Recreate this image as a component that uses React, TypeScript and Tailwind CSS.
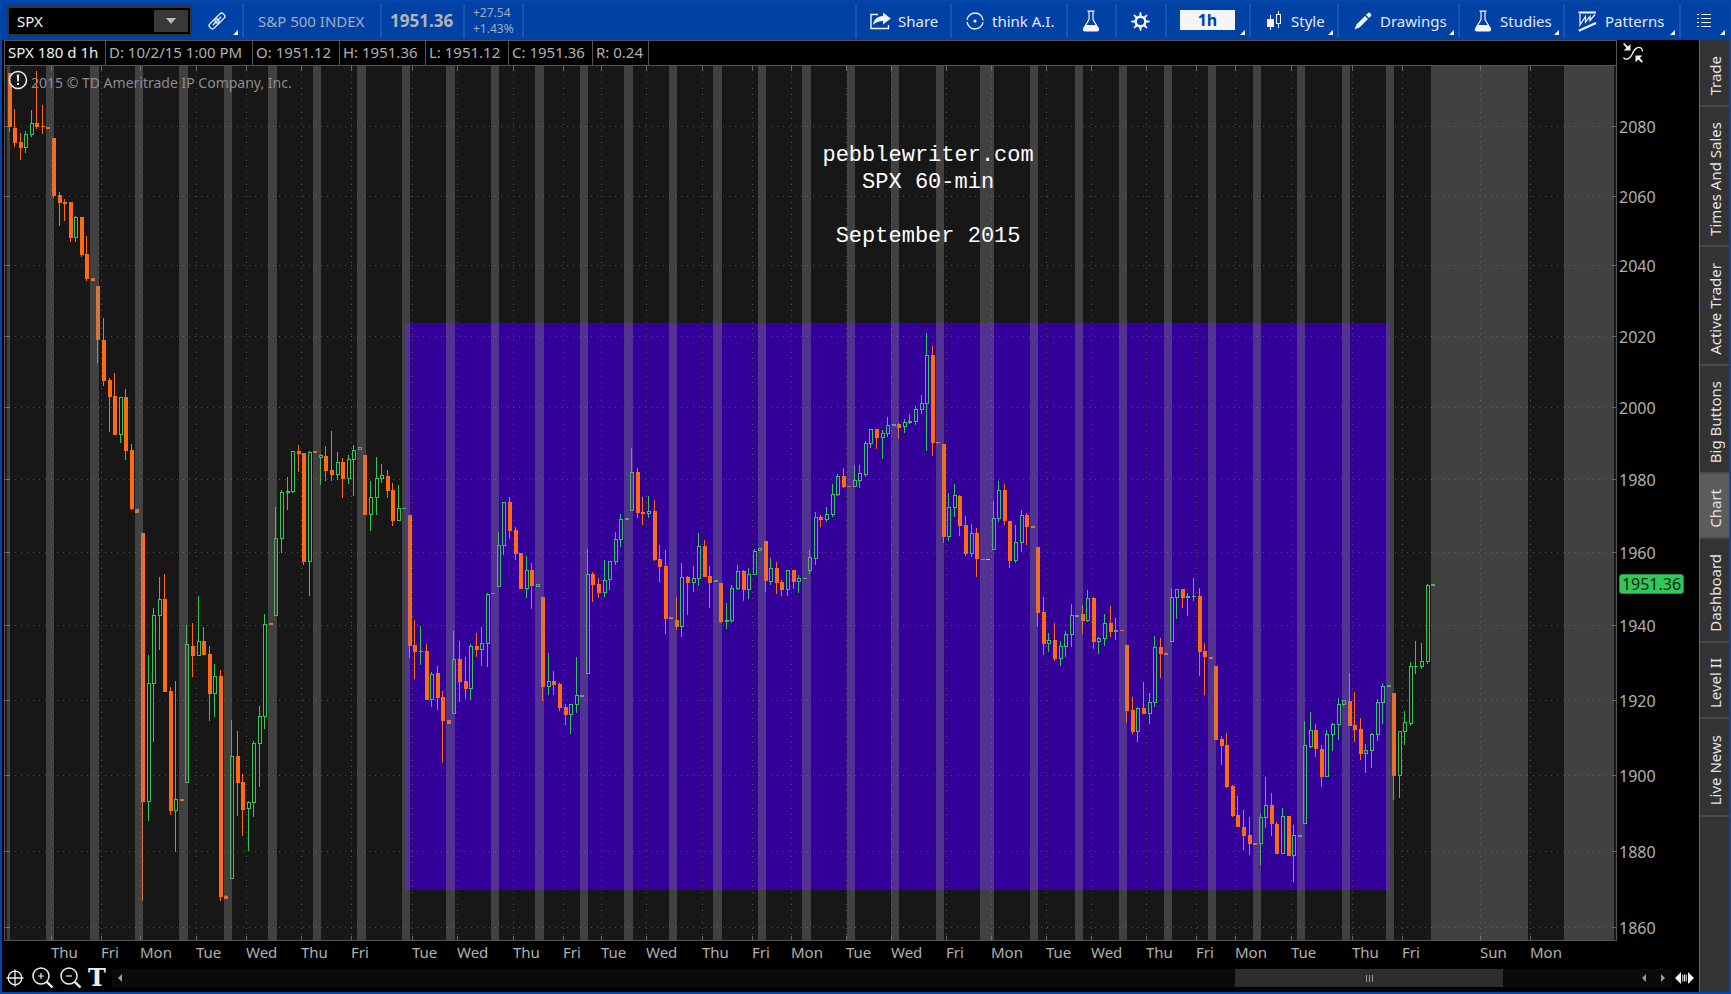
import type { ReactNode } from 'react';

/* ---------- chart data (plot coordinates) ---------- */

const PLOT = { x: 4, y: 65, w: 1613, h: 876 };

type Candle = ['o' | 'g' | 'w', number, number, number, number];

// colour, body top, body bottom, high, low
const CANDLES: Candle[] = [
  ['o', 73, 127, 73, 132], ['o', 128, 143, 109, 147], ['o', 142, 148, 133, 160], ['g', 134, 148, 131, 153],
  ['g', 123, 135, 110, 137], ['o', 123, 127, 71, 129], ['o', 126, 127, 105, 134], ['o', 127, 129, 127, 129],
  ['o', 138, 196, 138, 198], ['o', 195, 203, 192, 226], ['o', 202, 204, 199, 221], ['o', 202, 238, 202, 242],
  ['g', 217, 238, 216, 242], ['o', 217, 255, 217, 257], ['o', 254, 279, 236, 281], ['o', 278, 281, 278, 281],
  ['o', 286, 340, 286, 363], ['o', 340, 381, 318, 386], ['o', 380, 397, 378, 432], ['o', 396, 435, 373, 435],
  ['g', 397, 435, 397, 443], ['o', 397, 451, 389, 460], ['o', 450, 509, 444, 510], ['o', 509, 513, 509, 513],
  ['o', 533, 802, 533, 901], ['g', 683, 802, 655, 821], ['g', 615, 684, 608, 742], ['g', 599, 616, 577, 650],
  ['o', 599, 692, 574, 692], ['o', 691, 811, 687, 815], ['g', 799, 811, 681, 852], ['o', 799, 801, 799, 801],
  ['g', 644, 783, 625, 783], ['o', 646, 656, 623, 677], ['g', 641, 656, 596, 656], ['o', 641, 655, 627, 655],
  ['o', 654, 694, 646, 721], ['g', 676, 694, 664, 717], ['o', 676, 897, 670, 901], ['o', 896, 899, 895, 899],
  ['g', 756, 879, 720, 879], ['o', 756, 783, 731, 816], ['o', 782, 810, 774, 836], ['g', 802, 809, 801, 851],
  ['g', 743, 803, 741, 817], ['g', 716, 744, 706, 787], ['g', 624, 717, 614, 729], ['o', 623, 625, 623, 625],
  ['g', 538, 616, 507, 616], ['g', 492, 539, 490, 553], ['g', 491, 493, 477, 510], ['g', 451, 492, 451, 493],
  ['o', 451, 454, 445, 472], ['o', 453, 562, 453, 565], ['g', 452, 562, 451, 596], ['o', 451, 453, 451, 453],
  ['g', 455, 458, 454, 485], ['o', 456, 471, 446, 481], ['o', 470, 475, 431, 481], ['g', 462, 475, 452, 480],
  ['o', 462, 479, 458, 498], ['g', 459, 479, 455, 484], ['g', 450, 460, 445, 496], ['g', 447, 450, 447, 450],
  ['o', 455, 515, 455, 515], ['g', 497, 515, 481, 531], ['g', 478, 498, 457, 515], ['g', 475, 479, 464, 483],
  ['o', 476, 491, 470, 498], ['o', 490, 521, 483, 526], ['g', 508, 521, 485, 521], ['g', 508, 509, 508, 509],
  ['o', 515, 646, 515, 658], ['o', 645, 652, 620, 679], ['g', 651, 652, 626, 665], ['o', 651, 700, 644, 700],
  ['g', 674, 700, 672, 707], ['o', 673, 698, 666, 710], ['o', 697, 721, 691, 763], ['o', 720, 724, 720, 724],
  ['g', 659, 714, 631, 714], ['o', 659, 682, 641, 702], ['o', 681, 689, 657, 699], ['g', 646, 689, 644, 700],
  ['o', 646, 650, 633, 657], ['g', 643, 650, 627, 666], ['g', 594, 644, 593, 667], ['g', 593, 594, 593, 594],
  ['g', 545, 587, 532, 587], ['g', 502, 546, 502, 555], ['o', 502, 531, 497, 539], ['o', 530, 554, 527, 560],
  ['o', 553, 589, 553, 589], ['g', 570, 589, 556, 598], ['o', 570, 586, 563, 609], ['g', 584, 587, 584, 587],
  ['o', 597, 687, 597, 701], ['g', 681, 687, 653, 695], ['o', 681, 685, 671, 695], ['o', 684, 708, 683, 711],
  ['o', 707, 715, 704, 725], ['g', 704, 715, 704, 734], ['g', 695, 705, 657, 713], ['g', 695, 697, 695, 697],
  ['g', 574, 674, 549, 674], ['o', 574, 585, 572, 602], ['o', 584, 593, 578, 598], ['g', 580, 593, 560, 597],
  ['g', 561, 580, 561, 590], ['g', 539, 562, 532, 565], ['g', 519, 540, 514, 547], ['g', 518, 520, 518, 520],
  ['g', 472, 511, 448, 511], ['o', 472, 513, 468, 518], ['o', 512, 514, 497, 525], ['g', 511, 514, 496, 518],
  ['o', 511, 560, 500, 561], ['o', 559, 567, 545, 582], ['o', 566, 619, 550, 634], ['o', 617, 619, 617, 619],
  ['o', 620, 627, 597, 630], ['g', 577, 627, 563, 637], ['o', 577, 583, 576, 615], ['g', 578, 583, 566, 592],
  ['g', 546, 579, 533, 586], ['o', 546, 577, 540, 577], ['o', 576, 583, 566, 608], ['g', 580, 582, 580, 582],
  ['o', 583, 622, 583, 623], ['g', 620, 622, 603, 629], ['g', 588, 621, 585, 623], ['g', 571, 589, 565, 590],
  ['o', 571, 590, 570, 601], ['g', 574, 590, 568, 599], ['g', 551, 575, 549, 575], ['g', 548, 551, 548, 551],
  ['o', 541, 581, 541, 592], ['g', 568, 582, 558, 585], ['o', 568, 583, 562, 594], ['o', 582, 590, 580, 596],
  ['g', 570, 590, 570, 596], ['o', 570, 582, 570, 589], ['g', 578, 582, 575, 593], ['g', 578, 579, 578, 579],
  ['g', 557, 571, 550, 574], ['g', 517, 559, 512, 565], ['o', 517, 520, 515, 527], ['g', 514, 520, 507, 522],
  ['g', 494, 515, 484, 517], ['g', 476, 495, 474, 496], ['o', 476, 487, 468, 488], ['o', 486, 487, 486, 487],
  ['g', 480, 487, 465, 487], ['g', 473, 481, 465, 488], ['g', 443, 475, 441, 477], ['g', 429, 444, 429, 448],
  ['o', 429, 438, 429, 449], ['g', 433, 438, 430, 459], ['g', 425, 434, 417, 437], ['g', 424, 426, 424, 426],
  ['o', 424, 428, 423, 439], ['g', 422, 427, 419, 433], ['g', 421, 423, 414, 424], ['g', 409, 422, 406, 425],
  ['g', 403, 410, 395, 414], ['g', 355, 404, 333, 451], ['o', 355, 443, 346, 456], ['o', 442, 443, 442, 444],
  ['o', 444, 537, 444, 543], ['g', 507, 537, 493, 541], ['g', 495, 508, 484, 517], ['o', 496, 526, 495, 536],
  ['o', 525, 554, 516, 556], ['g', 533, 554, 524, 557], ['o', 533, 559, 528, 577], ['o', 559, 560, 559, 560],
  ['w', 559, 560, 559, 560], ['g', 518, 550, 501, 550], ['g', 490, 519, 481, 522], ['o', 490, 521, 484, 525],
  ['o', 521, 561, 521, 568], ['g', 542, 561, 525, 563], ['g', 515, 543, 510, 552], ['o', 515, 527, 513, 545],
  ['o', 526, 528, 526, 528], ['o', 547, 613, 547, 627], ['o', 612, 644, 597, 655], ['g', 640, 644, 633, 652],
  ['o', 640, 659, 623, 661], ['g', 646, 659, 641, 666], ['g', 634, 647, 631, 657], ['g', 615, 635, 604, 647],
  ['g', 615, 617, 615, 617], ['o', 614, 621, 605, 634], ['g', 598, 621, 590, 622], ['o', 598, 642, 597, 649],
  ['g', 638, 642, 637, 654], ['g', 623, 639, 614, 646], ['o', 623, 632, 606, 637], ['g', 630, 632, 618, 640],
  ['o', 630, 631, 630, 631], ['o', 645, 711, 645, 723], ['o', 710, 732, 697, 734], ['g', 708, 732, 707, 742],
  ['o', 708, 714, 682, 714], ['g', 702, 714, 693, 724], ['g', 647, 703, 636, 707], ['o', 647, 654, 638, 678],
  ['o', 653, 655, 653, 655], ['g', 597, 642, 588, 642], ['g', 589, 598, 589, 619], ['o', 589, 598, 589, 608],
  ['g', 596, 598, 593, 616], ['g', 596, 597, 578, 601], ['o', 596, 652, 588, 676], ['o', 651, 657, 643, 695],
  ['o', 657, 659, 657, 659], ['o', 666, 740, 666, 740], ['o', 739, 746, 736, 765], ['o', 745, 787, 733, 788],
  ['o', 786, 816, 785, 817], ['o', 815, 827, 796, 827], ['o', 827, 836, 810, 850], ['o', 835, 844, 817, 855],
  ['o', 843, 845, 843, 845], ['g', 817, 844, 814, 865], ['g', 805, 818, 777, 828], ['o', 805, 824, 793, 836],
  ['o', 824, 854, 822, 854], ['g', 816, 854, 808, 854], ['o', 816, 856, 816, 856], ['g', 835, 856, 825, 882],
  ['g', 835, 837, 835, 837], ['g', 745, 824, 721, 824], ['g', 730, 747, 712, 748], ['o', 730, 749, 724, 757],
  ['o', 749, 777, 745, 787], ['g', 734, 777, 730, 777], ['g', 724, 735, 723, 751], ['g', 704, 725, 698, 740],
  ['g', 700, 705, 700, 706], ['o', 701, 726, 673, 726], ['o', 725, 730, 692, 742], ['o', 729, 754, 718, 760],
  ['g', 750, 754, 744, 773], ['g', 734, 751, 733, 768], ['g', 702, 735, 699, 741], ['g', 686, 703, 683, 724],
  ['g', 685, 687, 685, 687], ['o', 693, 776, 693, 800], ['g', 731, 776, 731, 798], ['g', 722, 732, 711, 745],
  ['g', 666, 724, 662, 726], ['g', 666, 667, 641, 674], ['g', 661, 667, 643, 669], ['g', 585, 662, 584, 664],
  ['g', 584, 586, 584, 586],
];

const BANDS: [number, number][] = [
  [7, 10], [46, 54], [90, 99], [135, 143], [179, 188], [224, 232], [268, 277], [313, 321], [357, 366], [402, 410],
  [446, 455], [491, 499], [535, 544], [580, 588], [624, 633], [669, 677], [713, 722], [758, 766], [802, 811],
  [847, 855], [891, 899], [936, 944], [980, 994], [1030, 1038], [1075, 1083], [1119, 1127], [1164, 1172],
  [1208, 1216], [1253, 1261], [1297, 1305], [1342, 1350], [1386, 1394], [1431, 1528], [1564, 1614],
];

const PRICES: [number, number][] = [
  [2080, 126], [2060, 196], [2040, 265], [2020, 336], [2000, 407], [1980, 479],
  [1960, 552], [1940, 625], [1920, 700], [1900, 775], [1880, 851], [1860, 927],
];

const DAYS: [string, number][] = [
  ['Thu', 51], ['Fri', 101], ['Mon', 140], ['Tue', 196], ['Wed', 246], ['Thu', 301], ['Fri', 351], ['Tue', 412],
  ['Wed', 457], ['Thu', 513], ['Fri', 563], ['Tue', 601], ['Wed', 646], ['Thu', 702], ['Fri', 752], ['Mon', 791],
  ['Tue', 846], ['Wed', 891], ['Fri', 946], ['Mon', 991], ['Tue', 1046], ['Wed', 1091], ['Thu', 1146],
  ['Fri', 1196], ['Mon', 1235], ['Tue', 1291], ['Thu', 1352], ['Fri', 1402], ['Sun', 1480], ['Mon', 1530],
];

const COLORS = { o: '#ff6a13', g: '#33c759', w: '#e8e8e8' };

const leftPct = (x: number) => `${((x - PLOT.x) / PLOT.w) * 100}%`;
const topPct = (y: number) => `${((y - PLOT.y) / PLOT.h) * 100}%`;

function CandleShape({ candle, index }: { candle: Candle; index: number }) {
  const [kind, top, bottom, high, low] = candle;
  const x = Math.floor(8 + 5.561 * index);
  const color = COLORS[kind];
  const hollow = kind === 'g' && bottom - top > 2;
  return (
    <g fill={color}>
      {high < top && <rect x={x + 1} y={high} width={1} height={top - high} />}
      {low > bottom && <rect x={x + 1} y={bottom} width={1} height={low - bottom} />}
      {hollow ? (
        <rect x={x + 0.5} y={top + 0.5} width={3} height={bottom - top - 1} fill="none" stroke={color} />
      ) : (
        <rect x={x} y={top} width={4} height={bottom - top} />
      )}
    </g>
  );
}

function Chart() {
  return (
    <svg
      className="absolute inset-0 h-full w-full"
      viewBox="5 66 1611 874"
      preserveAspectRatio="none"
      shapeRendering="crispEdges"
      role="img"
      aria-label="SPX hourly candles"
    >
      <rect x={5} y={66} width={1611} height={874} fill="#171717" />
      <rect x={405} y={323} width={985} height={567} fill="#330099" />
      <g stroke="#505046" strokeWidth={1}>
        {PRICES.map(([p, y]) => (
          <g key={p}>
            <line x1={15} x2={1611} y1={y + 0.5} y2={y + 0.5} strokeDasharray="1 5" />
            <line x1={5} x2={10} y1={y + 0.5} y2={y + 0.5} stroke="#666" />
            <line x1={1612} x2={1616} y1={y + 0.5} y2={y + 0.5} stroke="#666" />
          </g>
        ))}
        {DAYS.map(([d, x]) => (
          <g key={d + x}>
            <line x1={x + 0.5} x2={x + 0.5} y1={76} y2={935} strokeDasharray="1 5" />
            <line x1={x + 0.5} x2={x + 0.5} y1={66} y2={71} stroke="#666" />
            <line x1={x + 0.5} x2={x + 0.5} y1={936} y2={940} stroke="#666" />
          </g>
        ))}
      </g>
      {CANDLES.map((c, i) => (
        <CandleShape key={i} candle={c} index={i} />
      ))}
      {BANDS.map(([a, b]) => (
        <rect key={a} x={a} y={66} width={b - a} height={874} fill="#888888" fillOpacity={0.375} />
      ))}
    </svg>
  );
}

/* ---------- icons ---------- */

function Corner() {
  return (
    <svg className="absolute right-1 bottom-[3px]" width="5" height="5" viewBox="0 0 5 5" aria-hidden="true">
      <path d="M5 0V5H0Z" fill="#fff" />
    </svg>
  );
}

function LinkIcon() {
  return (
    <svg width="18" height="18" viewBox="0 0 18 18" fill="none" stroke="#f2f2f2" strokeWidth="1.3" aria-hidden="true">
      <g transform="rotate(-45 9 9)">
        <rect x="-0.5" y="6" width="11" height="6" rx="2.4" />
        <rect x="7.5" y="6" width="11" height="6" rx="2.4" />
        <path d="M3 9H15" />
      </g>
    </svg>
  );
}

function ShareIcon() {
  return (
    <svg width="21" height="18" viewBox="0 0 21 18" aria-hidden="true">
      <path d="M8 2.5H1V16.5H18.5V13" fill="none" stroke="#f5f5f5" strokeWidth="1.4" />
      <path d="M3 13C3.800 7.500 7.500 4.200 13 4V.5L20.800 6.500L13 12.500V9C9 9 6 10 3 13Z" fill="#f5f5f5" />
    </svg>
  );
}

function ThinkIcon() {
  return (
    <svg width="18" height="18" viewBox="0 0 18 18" aria-hidden="true">
      <circle cx="9" cy="9" r="8" fill="none" stroke="#f5f5f5" strokeWidth="1.3" strokeDasharray="22.900 2.230" strokeDashoffset="-1.100" />
      <circle cx="9" cy="9" r="1.600" fill="#f5f5f5" />
    </svg>
  );
}

function FlaskIcon() {
  return (
    <svg width="18" height="22" viewBox="0 0 18 22" aria-hidden="true">
      <path d="M5.500 1.200H12.500M7 1.500V9.500L1.600 18.500Q.8 20.800 3 20.800H15Q17.200 20.800 16.400 18.500L11 9.500V1.500" fill="none" stroke="#f5f5f5" strokeWidth="1.200" />
      <path d="M3.800 15H14.200L16.600 19Q17 21 15 21H3Q1 21 1.400 19Z" fill="#f5f5f5" />
    </svg>
  );
}

function GearIcon() {
  return (
    <svg width="19" height="19" viewBox="0 0 19 19" stroke="#f5f5f5" aria-hidden="true">
      <circle cx="9.500" cy="9.500" r="4.800" fill="none" strokeWidth="2.400" />
      {[0, 45, 90, 135, 180, 225, 270, 315].map((a) => (
        <path key={a} d="M8.300 4.500L9 .3H10L10.700 4.500Z" fill="#f5f5f5" strokeWidth="0.400" transform={`rotate(${a} 9.500 9.500)`} />
      ))}
    </svg>
  );
}

function StyleIcon() {
  return (
    <svg width="16" height="20" viewBox="0 0 16 20" shapeRendering="crispEdges" aria-hidden="true">
      <path d="M3 4H4V19H3ZM0 8H7V16H0Z" fill="#f5f5f5" />
      <path d="M11 0H12V3H11ZM11 13H12V17H11Z" fill="#f5f5f5" />
      <rect x="9.500" y="3.500" width="4" height="9" fill="none" stroke="#f5f5f5" />
    </svg>
  );
}

function PencilIcon() {
  return (
    <svg width="18" height="18" viewBox="0 0 18 18" fill="#f5f5f5" aria-hidden="true">
      <path d="M.5 17.500L2.500 12.500L11 4L14 7L5.500 15.500Z" />
      <path d="M12 3L14 1Q15 .2 16 1L17 2Q17.800 3 17 4L15 6Z" />
    </svg>
  );
}

function PatternsIcon() {
  return (
    <svg width="19" height="21" viewBox="0 0 19 21" fill="none" stroke="#f5f5f5" aria-hidden="true">
      <path d="M.5 1.500H18" strokeWidth="2" />
      <path d="M.8 19.800L18 12" strokeWidth="2.200" />
      <path d="M2 3V14L7.500 5.500V11L12 5.500V9.500L17 3.500" strokeWidth="1.200" />
    </svg>
  );
}

function ListIcon() {
  return (
    <svg width="14" height="14" viewBox="0 0 14 14" fill="#f5f5f5" shapeRendering="crispEdges" aria-hidden="true">
      {[0, 4, 8, 12].map((y) => (
        <path key={y} d={`M0 ${y}H2V${y + 1}H0ZM4 ${y}H14V${y + 1}H4Z`} />
      ))}
    </svg>
  );
}

function ScaleIcon() {
  return (
    <svg width="20" height="20" viewBox="0 0 20 20" aria-hidden="true">
      <path d="M.5 14.500C2 17 6.500 17 9 11.500C11.500 5 15.500 3 18.500 5.500Q19.500 6.500 19.500 8.500" fill="none" stroke="#eee" strokeWidth="1.300" />
      <path d="M0 .8L1.200 0L5 3.500L7.500 1V7.500H.8L3.400 5ZM12.500 12.500H19.500L16.800 15L20 18.500L18.800 19.800L15.200 16.500L12.500 19.500Z" fill="#eee" />
    </svg>
  );
}

function MagnifierIcon({ plus }: { plus?: boolean }) {
  return (
    <svg width="22" height="22" viewBox="0 0 22 22" fill="none" stroke="#eee" aria-hidden="true">
      <circle cx="9" cy="9" r="8" strokeWidth="1.500" />
      <path d="M14.800 14.800L20.500 20.500" strokeWidth="2.400" />
      <path d={plus ? 'M6 9H12M9 6V12' : 'M6 9H12'} strokeWidth="1.200" />
    </svg>
  );
}

/* ---------- toolbar ---------- */

function ToolButton({
  className,
  children,
  label,
  menu,
}: {
  className: string;
  children: ReactNode;
  label?: string;
  menu?: boolean;
}) {
  return (
    <button
      type="button"
      aria-label={label}
      className={`relative flex shrink-0 items-center border-l-2 border-[#1a54b0] text-[15px] leading-5 text-[#e4e8f0] ${className}`}
    >
      {children}
      {menu && <Corner />}
    </button>
  );
}

function Toolbar() {
  return (
    <header className="flex h-10 items-stretch border-t-2 border-[#0646aa] bg-[#0041a5] pt-0.5 pb-0.5 whitespace-nowrap">
      <div className="relative flex w-60 shrink-0 items-center pl-[5px]">
        <div className="flex h-[30px] w-[185px] items-center border-2 border-[#333] bg-black pr-0.5">
          <input
            aria-label="Symbol"
            defaultValue="SPX"
            className="h-[26px] w-full min-w-0 bg-transparent pl-2 text-[15px] leading-6 text-[#f0f0f0] outline-none"
          />
          <button type="button" aria-label="Symbol list" className="flex h-[22px] w-[34px] shrink-0 items-center justify-center bg-[#383838]">
            <svg width="10" height="6" viewBox="0 0 10 6" aria-hidden="true">
              <path d="M0 0H10L5 6Z" fill="#bbb" />
            </svg>
          </button>
        </div>
        <button type="button" aria-label="Link" className="ml-4">
          <LinkIcon />
        </button>
        <Corner />
      </div>
      <div className="flex w-[138px] shrink-0 items-center border-l-2 border-[#1a54b0] pl-[14px] text-[15px] leading-5 text-[#a3acc0]">
        S&amp;P 500 INDEX
      </div>
      <div className="flex w-[83px] shrink-0 items-center border-l-2 border-[#1a54b0] pl-2 text-[17px] leading-5 font-bold text-[#b4b4b4]">
        1951.36
      </div>
      <div className="flex w-[59px] shrink-0 flex-col justify-center border-l-2 border-[#1a54b0] pl-2 text-xs leading-4 text-[#a3acc0]">
        <span>+27.54</span>
        <span>+1.43%</span>
      </div>
      <div className="min-w-0 flex-1 border-l-2 border-[#1a54b0]" />
      <ToolButton className="w-[95px] gap-[7px] pl-[13px]"><ShareIcon />Share</ToolButton>
      <ToolButton className="w-[116px] gap-2 pl-[14px]"><ThinkIcon />think A.I.</ToolButton>
      <ToolButton className="w-[49px] justify-center pr-0.5" label="Lab"><FlaskIcon /></ToolButton>
      <ToolButton className="w-[50px] justify-center pr-0.5" label="Settings"><GearIcon /></ToolButton>
      <ToolButton className="w-[84px] pl-[13px]" menu>
        <span className="-mt-0.5 flex h-5 w-[55px] items-center justify-center bg-[#f5f5f5] text-base font-bold text-[#0041a5]">1h</span>
      </ToolButton>
      <ToolButton className="w-[88px] gap-2 pl-4" menu><StyleIcon />Style</ToolButton>
      <ToolButton className="w-[121px] gap-2 pl-[15px]" menu><PencilIcon />Drawings</ToolButton>
      <ToolButton className="w-[105px] gap-2 pl-[14px]" menu><FlaskIcon />Studies</ToolButton>
      <ToolButton className="w-[116px] gap-2 pl-[13px]" menu><PatternsIcon />Patterns</ToolButton>
      <ToolButton className="w-[50px] pl-4" label="Menu" menu><ListIcon /></ToolButton>
    </header>
  );
}

/* ---------- page parts ---------- */

const QUOTE: [string, string][] = [
  ['SPX 180 d 1h', 'w-[101px] text-[#f0f0f0]'],
  ['D: 10/2/15 1:00 PM', 'w-[147px]'],
  ['O: 1951.12', 'w-[87px]'],
  ['H: 1951.36', 'w-[86px]'],
  ['L: 1951.12', 'w-[83px]'],
  ['C: 1951.36', 'w-[84px]'],
  ['R: 0.24', 'w-[56px]'],
];

const TABS: [string, string][] = [
  ['Trade', 'h-[67px]'],
  ['Times And Sales', 'h-[140px]'],
  ['Active Trader', 'h-[119px]'],
  ['Big Buttons', 'h-[108px]'],
  ['Chart', 'h-[65px] bg-[#5c5c5c]'],
  ['Dashboard', 'h-[104px]'],
  ['Level II', 'h-[76px]'],
  ['Live News', 'h-[98px]'],
];

function PlotArea() {
  return (
    <div className="relative min-h-0 overflow-hidden border border-[#555]">
      <Chart />
      <svg className="absolute top-[4px] left-[3px]" width="20" height="20" viewBox="0 0 20 20" aria-hidden="true">
        <circle cx="10" cy="10" r="8.500" fill="#171717" stroke="#f0f0f0" strokeWidth="1.500" />
        <path d="M8.800 4.500H11.200L10.800 11.500H9.200ZM9 13H11V15H9Z" fill="#f0f0f0" />
      </svg>
      <p className="absolute top-[5px] left-[26px] text-sm leading-6 whitespace-nowrap text-[#8c8c8c]">
        2015 © TD Ameritrade IP Company, Inc.
      </p>
      <p className="absolute top-[76px] left-[57.3%] w-60 -translate-x-1/2 text-center font-['Liberation_Mono',monospace] text-[22px] leading-[27px] whitespace-pre text-white">
        {'pebblewriter.com\nSPX 60-min\n\nSeptember 2015'}
      </p>
    </div>
  );
}

function PriceAxis() {
  return (
    <div className="relative text-base leading-5 text-[#b0b0b0]">
      {PRICES.map(([p, y]) => (
        <span key={p} className="absolute left-0.5 -translate-y-1/2" style={{ top: topPct(y + 1) }}>
          {p}
        </span>
      ))}
      <span
        className="absolute left-0.5 flex h-5 w-[65px] -translate-y-1/2 items-center justify-center rounded-[3px] border border-[#1f8f3b] bg-[#33c759] text-[#0b2a12]"
        style={{ top: topPct(584) }}
      >
        1951.36
      </span>
    </div>
  );
}

function BottomBar() {
  return (
    <footer className="flex h-[26px] items-center pb-0.5 pl-[2px] text-[#eee]">
      <button type="button" aria-label="Crosshair" className="ml-0.5">
        <svg width="18" height="18" viewBox="0 0 18 18" fill="none" stroke="#eee" strokeWidth="1.300" aria-hidden="true">
          <circle cx="9" cy="9" r="6.800" />
          <path d="M9 .5V17.500M.5 9H17.500" />
        </svg>
      </button>
      <button type="button" aria-label="Zoom in" className="ml-2"><MagnifierIcon plus /></button>
      <button type="button" aria-label="Zoom out" className="ml-1.5"><MagnifierIcon /></button>
      <button type="button" className="ml-1 w-[22px] text-center font-['DejaVu_Serif',serif] text-[24px] leading-6 font-bold">T</button>
      <div className="ml-1 flex h-[18px] min-w-0 flex-1 items-center bg-[#0a0a0a]">
        <button type="button" aria-label="Scroll left" className="pl-1.5">
          <svg width="4" height="8" viewBox="0 0 4 8" aria-hidden="true"><path d="M4 0V8L0 4Z" fill="#999" /></svg>
        </button>
        <div className="flex-[1113]" />
        <div className="flex h-full flex-[268] items-center justify-center gap-0.5 bg-[#2d2d2d]">
          <i className="h-[7px] w-px bg-[#999]" />
          <i className="h-[7px] w-px bg-[#999]" />
          <i className="h-[7px] w-px bg-[#999]" />
        </div>
        <div className="flex-[139]" />
        <button type="button" aria-label="Step left">
          <svg width="4" height="8" viewBox="0 0 4 8" aria-hidden="true"><path d="M4 0V8L0 4Z" fill="#999" /></svg>
        </button>
        <button type="button" aria-label="Step right" className="pr-[7px] pl-[15px]">
          <svg width="4" height="8" viewBox="0 0 4 8" aria-hidden="true"><path d="M0 0V8L4 4Z" fill="#999" /></svg>
        </button>
      </div>
      <button type="button" aria-label="Resize" className="mr-[5px] ml-[3px]">
        <svg width="19" height="12" viewBox="0 0 19 12" fill="#f5f5f5" aria-hidden="true">
          <path d="M6 0V12L0 6ZM13 0V12L19 6ZM7.300 2.500H8.300V9.500H7.300ZM9 2.500H10V9.500H9ZM10.700 2.500H11.700V9.500H10.700Z" />
        </svg>
      </button>
    </footer>
  );
}

export default function App() {
  return (
    <div className="flex min-h-screen flex-col border-x-2 border-b-2 border-[#0646aa] bg-black font-['Noto_Sans',sans-serif]">
      <Toolbar />
      <div className="flex flex-1">
        <main className="flex min-w-0 flex-1 flex-col">
          <div className="grid flex-1 grid-cols-[minmax(0,1fr)_82px] grid-rows-[25px_minmax(560px,1fr)_25px] pl-[2px]">
            <div className="flex border-x border-t border-[#555] text-[15px] leading-[22px] whitespace-nowrap text-[#b0b0b0]">
              {QUOTE.map(([t, cls]) => (
                <span key={t} className={`shrink-0 border-r border-[#555] pl-[3px] ${cls}`}>{t}</span>
              ))}
            </div>
            <div className="pt-[3px] pl-[6px]">
              <button type="button" aria-label="Scale mode" className="block"><ScaleIcon /></button>
            </div>
            <PlotArea />
            <PriceAxis />
            <div className="relative text-[15px] leading-[22px] text-[#b0b0b0]">
              {DAYS.map(([d, x]) => (
                <span key={d + x} className="absolute top-0" style={{ left: leftPct(x) }}>{d}</span>
              ))}
            </div>
          </div>
          <BottomBar />
        </main>
        <nav className="flex w-[30px] shrink-0 flex-col border-l border-[#666] bg-[#333]" aria-label="Gadgets">
          {TABS.map(([t, cls]) => (
            <button
              key={t}
              type="button"
              className={`flex shrink-0 items-center justify-center border-b-2 border-[#4a4a4a] pt-1.5 text-[15px] leading-5 whitespace-nowrap text-[#e4e4e4] ${cls}`}
            >
              <span className="rotate-180 [writing-mode:vertical-rl]">{t}</span>
            </button>
          ))}
        </nav>
      </div>
    </div>
  );
}
